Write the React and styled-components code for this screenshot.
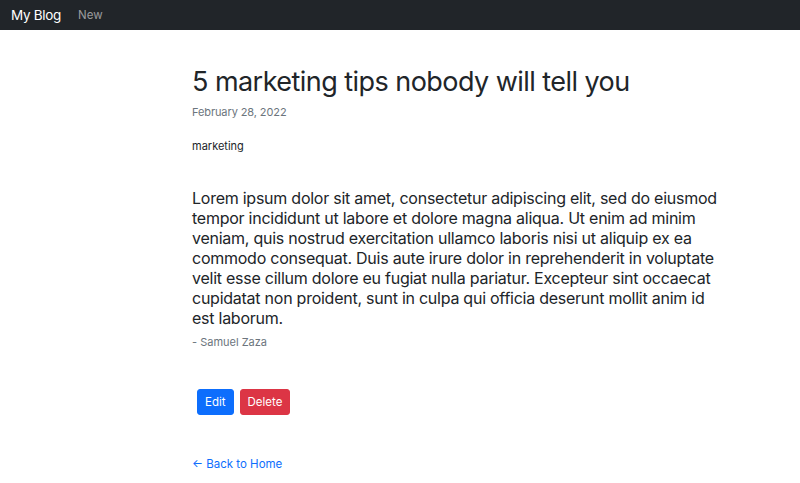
import React from "react";
import styled, { createGlobalStyle } from "styled-components";

const Global = createGlobalStyle`
  html, body { margin: 0; padding: 0; background: #fff; }
  body { font-family: Inter, "Noto Sans", sans-serif; color: #212529; }
  * { box-sizing: border-box; }
`;

const Navbar = styled.nav`
  height: 30px;
  background: #212529;
  display: flex;
  align-items: center;
  padding: 0 11px;
  gap: 17px;
`;

const Brand = styled.a`
  color: #fff;
  font-size: 13.5px;
  letter-spacing: -0.3px;
  text-decoration: none;
`;

const NavLink = styled.a`
  color: rgba(255, 255, 255, 0.55);
  font-size: 11.5px;
  text-decoration: none;
`;

const Main = styled.main`
  margin-left: 192px;
  width: 528px;
  padding-top: 35px;
  display: flex;
  flex-direction: column;
`;

const Title = styled.h1`
  margin: 0;
  font-size: 27px;
  font-weight: 400;
  line-height: 34px;
  letter-spacing: -0.55px;
  color: #212529;
`;

const DateText = styled.div`
  margin-top: 5px;
  font-size: 11px;
  line-height: 16px;
  letter-spacing: -0.1px;
  color: #6c757d;
`;

const Tag = styled.div`
  margin-top: 18px;
  font-size: 11px;
  line-height: 16px;
  color: #212529;
`;

const Body = styled.p`
  margin: 34px 0 0;
  font-size: 16px;
  line-height: 20px;
  letter-spacing: -0.25px;
  color: #212529;
`;

const Author = styled.div`
  margin-top: 6px;
  font-size: 11px;
  line-height: 16px;
  color: #6c757d;
`;

const Actions = styled.div`
  display: flex;
  gap: 6px;
  margin-top: 39px;
  padding-left: 5px;
`;

const Button = styled.button`
  height: 26px;
  padding: 0 7px;
  font-family: inherit;
  font-size: 11.5px;
  color: #fff;
  border: 1px solid ${(p) => p.$bg};
  background: ${(p) => p.$bg};
  border-radius: 3px;
  cursor: pointer;
`;

const BackLink = styled.a`
  margin-top: 41px;
  font-size: 11.5px;
  line-height: 16px;
  color: #0d6efd;
  text-decoration: none;
`;

export default function App() {
  return (
    <>
      <Global />
      <Navbar>
        <Brand href="#">My Blog</Brand>
        <NavLink href="#">New</NavLink>
      </Navbar>
      <Main>
        <Title>5 marketing tips nobody will tell you</Title>
        <DateText>February 28, 2022</DateText>
        <Tag>marketing</Tag>
        <Body>
          Lorem ipsum dolor sit amet, consectetur adipiscing elit, sed do eiusmod
          tempor incididunt ut labore et dolore magna aliqua. Ut enim ad minim
          veniam, quis nostrud exercitation ullamco laboris nisi ut aliquip ex ea
          commodo consequat. Duis aute irure dolor in reprehenderit in voluptate
          velit esse cillum dolore eu fugiat nulla pariatur. Excepteur sint occaecat
          cupidatat non proident, sunt in culpa qui officia deserunt mollit anim id
          est laborum.
        </Body>
        <Author>- Samuel Zaza</Author>
        <Actions>
          <Button $bg="#0d6efd">Edit</Button>
          <Button $bg="#dc3545">Delete</Button>
        </Actions>
        <BackLink href="#">← Back to Home</BackLink>
      </Main>
    </>
  );
}
